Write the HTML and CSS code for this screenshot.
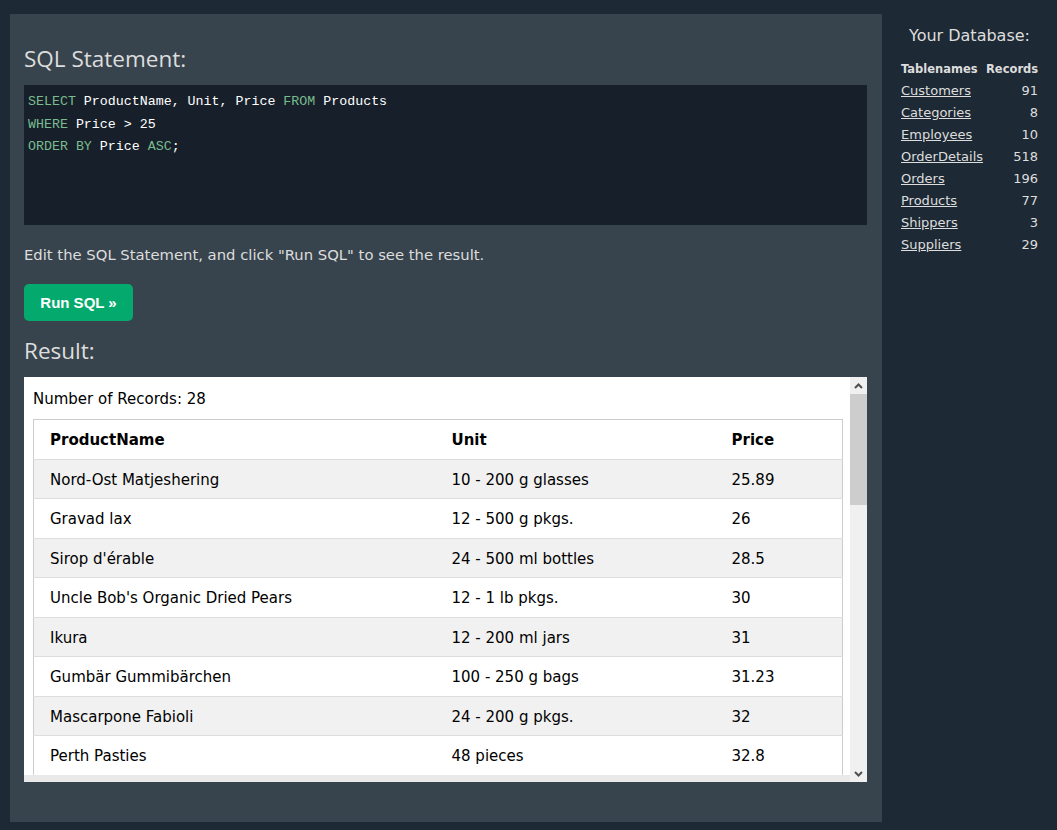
FILE: index.html
```html
<!DOCTYPE html>
<html>
<head>
<meta charset="utf-8">
<link rel="stylesheet" href="styles.css">
</head>
<body>
<div class="page">
  <main class="panel">
    <h2 class="heading">SQL Statement:</h2>
    <div class="code">
      <div class="code-line"><span class="kw">SELECT</span> ProductName, Unit, Price <span class="kw">FROM</span> Products</div>
      <div class="code-line"><span class="kw">WHERE</span> Price &gt; 25</div>
      <div class="code-line"><span class="kw">ORDER BY</span> Price <span class="kw">ASC</span>;</div>
    </div>
    <p class="hint">Edit the SQL Statement, and click "Run SQL" to see the result.</p>
    <button class="run-btn">Run SQL »</button>
    <h2 class="heading result-heading">Result:</h2>
    <div class="result">
      <div class="result-body">
        <div class="result-content">
          <div class="count">Number of Records: 28</div>
          <table class="data">
            <colgroup><col class="c1"><col class="c2"><col class="c3"></colgroup>
            <tr><th>ProductName</th><th>Unit</th><th>Price</th></tr>
            <tr><td>Nord-Ost Matjeshering</td><td>10 - 200 g glasses</td><td>25.89</td></tr>
            <tr><td>Gravad lax</td><td>12 - 500 g pkgs.</td><td>26</td></tr>
            <tr><td>Sirop d'érable</td><td>24 - 500 ml bottles</td><td>28.5</td></tr>
            <tr><td>Uncle Bob's Organic Dried Pears</td><td>12 - 1 lb pkgs.</td><td>30</td></tr>
            <tr><td>Ikura</td><td>12 - 200 ml jars</td><td>31</td></tr>
            <tr><td>Gumbär Gummibärchen</td><td>100 - 250 g bags</td><td>31.23</td></tr>
            <tr><td>Mascarpone Fabioli</td><td>24 - 200 g pkgs.</td><td>32</td></tr>
            <tr><td>Perth Pasties</td><td>48 pieces</td><td>32.8</td></tr>
          </table>
        </div>
        <div class="hbar"></div>
      </div>
      <div class="vbar">
        <div class="vbtn"><svg width="9" height="6" viewBox="0 0 9 6"><path d="M1 5 L4.5 1.5 L8 5" fill="none" stroke="#505050" stroke-width="2"/></svg></div>
        <div class="vthumb"></div>
        <div class="vtrack"></div>
        <div class="vbtn"><svg width="9" height="6" viewBox="0 0 9 6"><path d="M1 1 L4.5 4.5 L8 1" fill="none" stroke="#505050" stroke-width="2"/></svg></div>
      </div>
    </div>
  </main>
  <aside class="side">
    <h3 class="side-title">Your Database:</h3>
    <table class="db">
      <tr><th class="tn">Tablenames</th><th class="rc">Records</th></tr>
      <tr><td><a href="#">Customers</a></td><td class="num">91</td></tr>
      <tr><td><a href="#">Categories</a></td><td class="num">8</td></tr>
      <tr><td><a href="#">Employees</a></td><td class="num">10</td></tr>
      <tr><td><a href="#">OrderDetails</a></td><td class="num">518</td></tr>
      <tr><td><a href="#">Orders</a></td><td class="num">196</td></tr>
      <tr><td><a href="#">Products</a></td><td class="num">77</td></tr>
      <tr><td><a href="#">Shippers</a></td><td class="num">3</td></tr>
      <tr><td><a href="#">Suppliers</a></td><td class="num">29</td></tr>
    </table>
  </aside>
</div>
</body>
</html>
```

FILE: styles.css
```css
html, body {
  margin: 0;
  padding: 0;
  background: #1d2a35;
}
body {
  font-family: "DejaVu Sans", Verdana, sans-serif;
  color: #ddd;
}
.page {
  display: flex;
  align-items: flex-start;
  padding-top: 14px;
  padding-left: 10px;
}
.panel {
  width: 872px;
  height: 808px;
  box-sizing: border-box;
  background: #38444d;
  padding: 27px 15px 0 14px;
}
.heading {
  margin: 0;
  font-family: "Open Sans", "Noto Sans", sans-serif;
  font-weight: 400;
  font-size: 22.5px;
  line-height: 36px;
  color: #ddd;
}
.code {
  margin-top: 8px;
  height: 140px;
  box-sizing: border-box;
  background: #17202a;
  padding: 6px 4px;
  font-family: "Liberation Mono", monospace;
  font-size: 13.3px;
  line-height: 22.5px;
  color: #fff;
}
.code .kw { color: #77bb8e; }
.hint {
  margin: 19px 0 0;
  font-size: 14.8px;
  line-height: 22px;
  color: #ddd;
}
.run-btn {
  display: block;
  margin-top: 18px;
  width: 109px;
  height: 37px;
  border: none;
  border-radius: 5px;
  background: #04aa6d;
  color: #fff;
  font-family: "Liberation Sans", Arial, sans-serif;
  font-weight: 700;
  font-size: 15px;
  padding: 0;
}
.result-heading {
  margin-top: 12px;
}
.result {
  margin-top: 8px;
  height: 405px;
  display: flex;
  background: #fff;
}
.result-body {
  flex: 1;
  display: flex;
  flex-direction: column;
  min-width: 0;
}
.result-content {
  flex: 1;
  overflow: hidden;
  padding: 13px 8px 0 9px;
  color: #000;
}
.count {
  font-size: 15px;
  line-height: 18px;
  margin-bottom: 11px;
}
.data {
  width: 809px;
  border-collapse: collapse;
  border: 1px solid #ccc;
  font-size: 15px;
  table-layout: fixed;
}
.c1 { width: 402px; }
.c2 { width: 280px; }
.c3 { width: 127px; }
.data th, .data td {
  text-align: left;
  padding: 9px 8px 7px 16px;
  line-height: 22.5px;
  border-bottom: 1px solid #ddd;
  white-space: nowrap;
}
.data th { font-weight: 700; }
.data tr:nth-child(even) td { background: #f1f1f1; }
.hbar {
  height: 7px;
  background: #e9e9e9;
}
.vbar {
  width: 17px;
  display: flex;
  flex-direction: column;
  background: #f0f0f0;
}
.vbtn {
  height: 17px;
  display: flex;
  align-items: center;
  justify-content: center;
}
.vthumb {
  height: 111px;
  background: #cdcdcd;
}
.vtrack { flex: 1; }
.side {
  width: 175px;
  padding-top: 11px;
}
.side-title {
  margin: 0;
  text-align: center;
  font-weight: 400;
  font-size: 16px;
  line-height: 22px;
  color: #ddd;
}
.db {
  width: 137px;
  margin: 11px 0 0 19px;
  border-collapse: collapse;
  font-size: 13px;
  color: #ddd;
}
.db th {
  font-weight: 700;
  font-size: 11.5px;
  padding: 0;
  line-height: 22px;
  text-align: left;
  white-space: nowrap;
}
.db .rc { text-align: right; padding-left: 3px; }
.db td {
  padding: 0;
  line-height: 22px;
}
.db td.num { text-align: right; }
.db a { color: #ddd; }
```
